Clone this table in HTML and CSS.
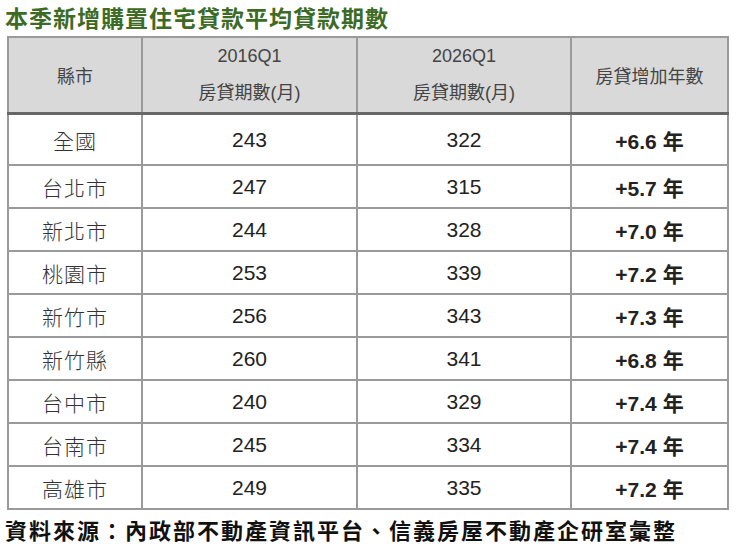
FILE: index.html
```html
<!DOCTYPE html>
<html lang="zh-Hant">
<head>
<meta charset="utf-8">
<title>本季新增購置住宅貸款平均貸款期數</title>
<link rel="stylesheet" href="styles.css">
</head>
<body>
<div class="page">
  <h1 class="title">本季新增購置住宅貸款平均貸款期數</h1>
  <table class="data">
    <colgroup>
      <col class="c1"><col class="c2"><col class="c3"><col class="c4">
    </colgroup>
    <thead>
      <tr>
        <th>縣市</th>
        <th><span class="l1">2016Q1</span><span class="l2">房貸期數(月)</span></th>
        <th><span class="l1">2026Q1</span><span class="l2">房貸期數(月)</span></th>
        <th>房貸增加年數</th>
      </tr>
    </thead>
    <tbody>
      <tr class="first"><td class="city">全國</td><td>243</td><td>322</td><td class="inc">+6.6 年</td></tr>
      <tr><td class="city">台北市</td><td>247</td><td>315</td><td class="inc">+5.7 年</td></tr>
      <tr><td class="city">新北市</td><td>244</td><td>328</td><td class="inc">+7.0 年</td></tr>
      <tr><td class="city">桃園市</td><td>253</td><td>339</td><td class="inc">+7.2 年</td></tr>
      <tr><td class="city">新竹市</td><td>256</td><td>343</td><td class="inc">+7.3 年</td></tr>
      <tr><td class="city">新竹縣</td><td>260</td><td>341</td><td class="inc">+6.8 年</td></tr>
      <tr><td class="city">台中市</td><td>240</td><td>329</td><td class="inc">+7.4 年</td></tr>
      <tr><td class="city">台南市</td><td>245</td><td>334</td><td class="inc">+7.4 年</td></tr>
      <tr><td class="city">高雄市</td><td>249</td><td>335</td><td class="inc">+7.2 年</td></tr>
    </tbody>
  </table>
  <p class="source">資料來源：內政部不動產資訊平台、信義房屋不動產企研室彙整</p>
</div>
</body>
</html>
```
FILE: styles.css
```css
html, body {
  margin: 0;
  padding: 0;
  background: #ffffff;
}
.page {
  width: 738px;
  font-family: "Liberation Sans", "Noto Sans CJK TC", sans-serif;
  color: #222;
}
.title {
  margin: 0;
  padding: 2px 0 0 5px;
  height: 34px;
  line-height: 30px;
  font-size: 23px;
  letter-spacing: 1px;
  font-weight: bold;
  color: #3d6b25;
  font-family: "Noto Sans CJK TC", sans-serif;
}
.data {
  margin-left: 7px;
  border-collapse: collapse;
  width: 720px;
  table-layout: fixed;
}
.c1 { width: 134px; }
.c2 { width: 215px; }
.c3 { width: 214px; }
.c4 { width: 157px; }
.data th, .data td {
  border: 2px solid #9a9a9a;
  text-align: center;
  padding: 0;
}
.data thead th {
  background: #d9d9d9;
  height: 69px;
  font-weight: normal;
  font-size: 18px;
  color: #444;
  border-bottom: 3px solid #676767;
  font-family: "Liberation Sans", "Noto Sans CJK TC", sans-serif;
}
.l1, .l2 {
  display: block;
  line-height: 37px;
}
.data tbody td {
  height: 41px;
  font-size: 21px;
  color: #222;
}
.data tbody tr.first td {
  height: 49px;
}
.data td.city {
  font-family: "Noto Sans CJK TC", sans-serif;
  font-weight: 300;
  letter-spacing: 1px;
  color: #333;
}
.data td.inc {
  font-weight: bold;
  color: #222;
}
.source {
  margin: 0;
  padding-left: 5px;
  line-height: 38px;
  font-size: 22px;
  letter-spacing: 2px;
  font-weight: bold;
  color: #111;
  font-family: "Noto Sans CJK TC", sans-serif;
}
```
